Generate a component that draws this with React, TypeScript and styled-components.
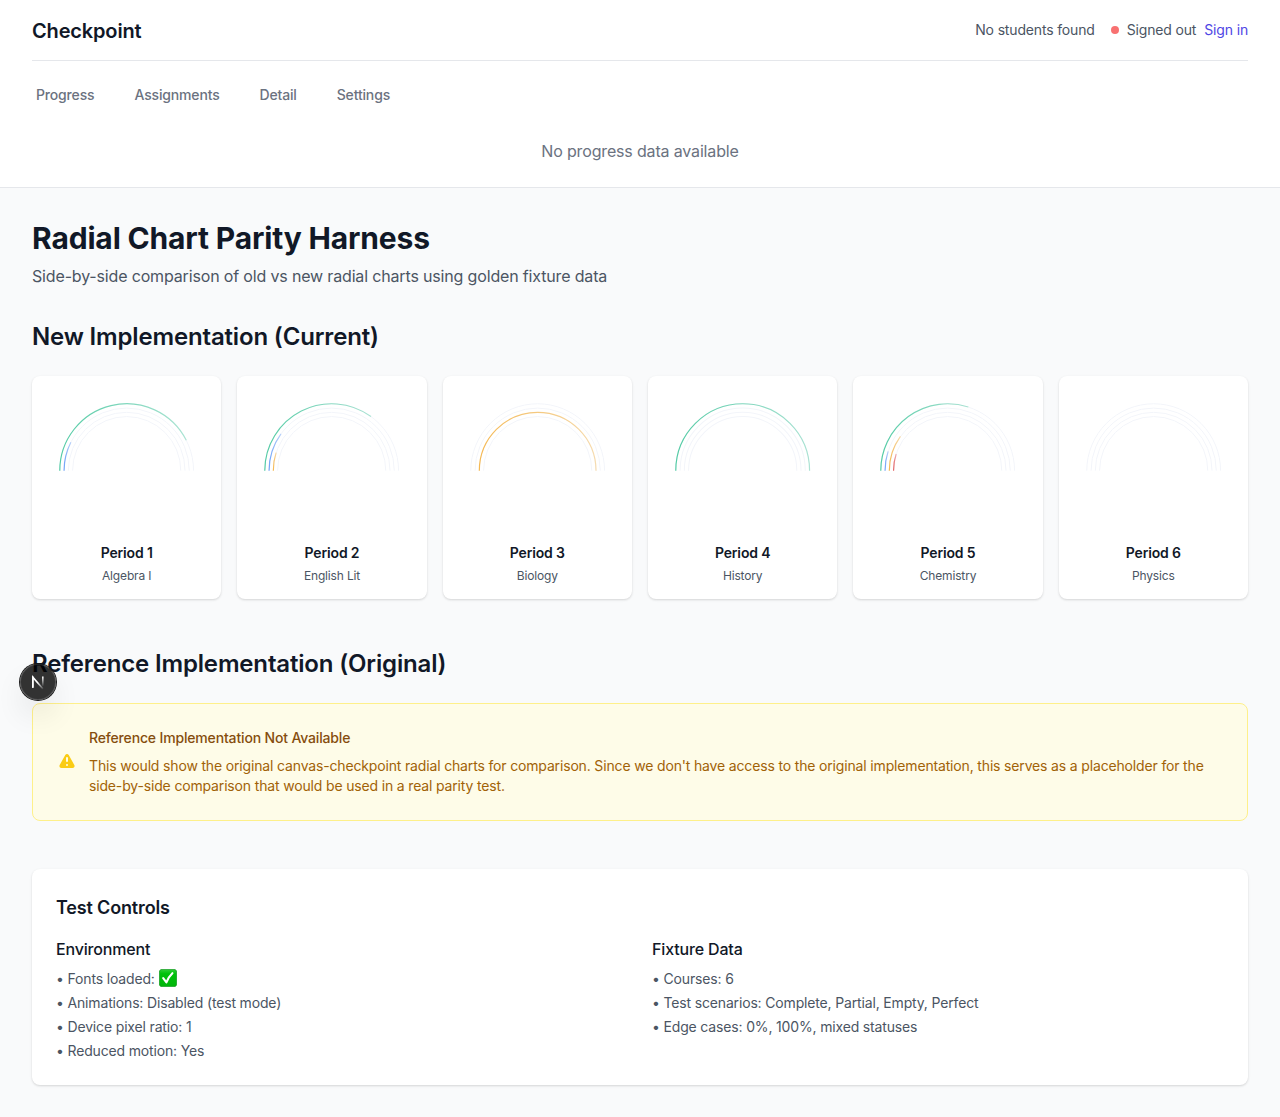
import React from "react";
import styled, { createGlobalStyle } from "styled-components";

const GlobalStyle = createGlobalStyle`
  *, *::before, *::after { box-sizing: border-box; margin: 0; padding: 0; }
  body {
    background: #f9fafb;
    color: #111827;
    font-family: Inter, "Liberation Sans", sans-serif;
    font-size: 16px;
    line-height: 24px;
    letter-spacing: -0.01em;
    overflow-x: hidden;
    -webkit-font-smoothing: antialiased;
  }
`;

const Page = styled.div`
  min-height: 1117px;
  background: #f9fafb;
`;

const Header = styled.header`
  height: 188px;
  padding: 0 32px;
  background: #fff;
  border-bottom: 1px solid #e5e7eb;
`;

const TopBar = styled.div`
  display: flex;
  align-items: center;
  justify-content: space-between;
  height: 61px;
  border-bottom: 1px solid #e5e7eb;
`;

const Brand = styled.div`
  font-size: 20px;
  line-height: 28px;
  font-weight: 600;
  padding-top: 2px;
`;

const Account = styled.div`
  display: flex;
  align-items: center;
  gap: 8px;
  font-size: 14px;
  line-height: 20px;
  color: #4b5563;
`;

const StudentStatus = styled.span`
  margin-right: 8px;
`;

const StatusDot = styled.span`
  width: 8px;
  height: 8px;
  border-radius: 50%;
  background: #f87171;
`;

const SignIn = styled.a`
  color: #4f46e5;
`;

const Nav = styled.nav`
  display: flex;
  gap: 40px;
  padding: 24px 4px 0;
`;

const NavItem = styled.a`
  font-size: 14px;
  line-height: 20px;
  font-weight: 500;
  color: #6b7280;
`;

const EmptyMessage = styled.p`
  margin-top: 34px;
  text-align: center;
  color: #6b7280;
`;

const Main = styled.main`
  padding: 32px;
`;

const Title = styled.h1`
  font-size: 30px;
  line-height: 36px;
  font-weight: 700;
`;

const Subtitle = styled.p`
  margin-top: 8px;
  color: #4b5563;
`;

const Section = styled.section<{ $gap: number }>`
  margin-top: ${(p) => p.$gap}px;
`;

const SectionTitle = styled.h2`
  padding-top: 1px;
  margin-bottom: 23px;
  font-size: 24px;
  line-height: 32px;
  font-weight: 600;
`;

const Card = styled.div`
  background: #fff;
  border-radius: 8px;
  box-shadow: 0 1px 3px rgba(0, 0, 0, 0.1), 0 1px 2px rgba(0, 0, 0, 0.06);
`;

const CourseGrid = styled.div`
  display: grid;
  grid-template-columns: repeat(6, minmax(0, 1fr));
  gap: 16px;
`;

const CourseCard = styled(Card)`
  padding: 16px 16px 15px;
  text-align: center;
`;

const ChartBox = styled.div`
  height: 151.33px;
`;

const ChartSvg = styled.svg`
  display: block;
  width: 100%;
  overflow: visible;
`;

const CourseName = styled.h3`
  font-size: 14px;
  line-height: 20px;
  font-weight: 600;
`;

const CourseSubject = styled.p`
  margin-top: 5px;
  font-size: 12px;
  line-height: 16px;
  color: #4b5563;
`;

const Notice = styled.div`
  display: flex;
  align-items: center;
  gap: 12px;
  padding: 24px;
  background: #fefce8;
  border: 1px solid #fef08a;
  border-radius: 8px;
  font-size: 14px;
  line-height: 20px;
`;

const WarningSvg = styled.svg`
  flex: none;
  width: 20px;
  height: 20px;
  fill: #facc15;
`;

const NoticeTitle = styled.h3`
  font-size: 14px;
  font-weight: 500;
  color: #854d0e;
`;

const NoticeText = styled.p`
  margin-top: 8px;
  color: #a16207;
`;

const Controls = styled(Card)`
  padding: 25px 24px 24px;
`;

const ControlsTitle = styled.h3`
  font-size: 18px;
  line-height: 28px;
  font-weight: 600;
`;

const Columns = styled.div`
  display: grid;
  grid-template-columns: 1fr 1fr;
  gap: 24px;
  margin-top: 15px;
`;

const ColumnTitle = styled.h4`
  margin-bottom: 8px;
  font-size: 16px;
  line-height: 24px;
  font-weight: 500;
`;

const List = styled.ul`
  display: grid;
  gap: 4px;
  list-style: none;
`;

const Item = styled.li`
  display: flex;
  align-items: center;
  height: 20px;
  font-size: 14px;
  line-height: 20px;
  color: #4b5563;
`;

const CheckSvg = styled.svg`
  width: 18px;
  height: 18px;
  margin: -2px 0 0 4px;
`;

const DevBadge = styled.button`
  position: fixed;
  left: 20px;
  top: 664px;
  width: 36px;
  height: 36px;
  border: 0;
  border-radius: 50%;
  background: rgba(0, 0, 0, 0.8);
  box-shadow: 0 0 0 1px #171717, inset 0 0 0 1px rgba(255, 255, 255, 0.14),
    0 16px 32px -8px rgba(0, 0, 0, 0.24);
`;

const BadgeSvg = styled.svg`
  display: block;
  width: 36px;
  height: 36px;
`;

const RADII = [66.9, 62.6, 58.35, 54.1];
const COLORS = ["#10b981", "#3b82f6", "#f59e0b", "#dc2626"];
const CENTER = 78.67;

function arc(radius: number, fraction: number) {
  const angle = Math.PI * (1 - fraction);
  const x = CENTER + radius * Math.cos(angle);
  const y = CENTER - radius * Math.sin(angle);
  return `M${CENTER - radius} ${CENTER}A${radius} ${radius} 0 0 1 ${x} ${y}`;
}

function RadialChart({ id, values }: { id: number; values: number[] }) {
  return (
    <ChartSvg viewBox="0 0 157.33 157.33" fill="none">
      <defs>
        {COLORS.map((color, i) => (
          <linearGradient key={color} id={`ring-${id}-${i}`} x1="0" y1="0" x2="1" y2="0">
            <stop offset="0" stopColor={color} stopOpacity="0.7" />
            <stop offset="1" stopColor={color} stopOpacity="0.32" />
          </linearGradient>
        ))}
      </defs>
      {RADII.map((r) => (
        <path key={r} d={arc(r, 1)} stroke="#f3f5fa" strokeWidth="1" />
      ))}
      {values.map((value, i) =>
        value > 0 ? (
          <path key={i} d={arc(RADII[i], value)} stroke={`url(#ring-${id}-${i})`} strokeWidth="1.2" />
        ) : null
      )}
    </ChartSvg>
  );
}

const COURSES = [
  { name: "Period 1", subject: "Algebra I", values: [0.85, 0.15, 0, 0] },
  { name: "Period 2", subject: "English Lit", values: [0.7, 0.2, 0.1, 0] },
  { name: "Period 3", subject: "Biology", values: [0, 0, 1, 0] },
  { name: "Period 4", subject: "History", values: [1, 0, 0, 0] },
  { name: "Period 5", subject: "Chemistry", values: [0.6, 0.1, 0.2, 0.1] },
  { name: "Period 6", subject: "Physics", values: [0, 0, 0, 0] },
];

function WarningIcon() {
  return (
    <WarningSvg viewBox="0 0 20 20">
      <path
        fillRule="evenodd"
        clipRule="evenodd"
        d="M8.257 3.099c.765-1.36 2.722-1.36 3.486 0l5.58 9.92c.75 1.334-.213 2.98-1.742 2.98H4.42c-1.53 0-2.493-1.646-1.743-2.98l5.58-9.92zM11 13a1 1 0 11-2 0 1 1 0 012 0zm-1-8a1 1 0 00-1 1v3a1 1 0 002 0V6a1 1 0 00-1-1z"
      />
    </WarningSvg>
  );
}

function CheckIcon() {
  return (
    <CheckSvg viewBox="0 0 18 18">
      <defs>
        <linearGradient id="check-fill" x1="0" y1="0" x2="0" y2="1">
          <stop offset="0" stopColor="#31cf38" />
          <stop offset="0.25" stopColor="#00c20b" />
          <stop offset="1" stopColor="#00b50a" />
        </linearGradient>
      </defs>
      <rect x="0.4" y="0.4" width="17.2" height="17.2" rx="2.6" fill="url(#check-fill)" stroke="#159d22" strokeWidth="0.8" />
      <path d="M4.2 9.2L7.4 13.4Q9.2 8.2 13.4 4.2" fill="none" stroke="#fff" strokeWidth="2.1" strokeLinecap="round" strokeLinejoin="round" />
    </CheckSvg>
  );
}

function FrameworkMark() {
  return (
    <BadgeSvg viewBox="0 0 36 36" fill="none">
      <defs>
        <linearGradient id="stem" x1="0" y1="12.5" x2="0" y2="22.5" gradientUnits="userSpaceOnUse">
          <stop stopColor="#fff" />
          <stop offset="1" stopColor="#fff" stopOpacity="0" />
        </linearGradient>
        <linearGradient id="diagonal" x1="18" y1="18" x2="23.5" y2="24.5" gradientUnits="userSpaceOnUse">
          <stop stopColor="#fff" />
          <stop offset="1" stopColor="#fff" stopOpacity="0.1" />
        </linearGradient>
      </defs>
      <path d="M12.8 23.7V13.1L22.9 24.7" stroke="url(#diagonal)" strokeWidth="1.6" />
      <path d="M12.8 23.7V12.5" stroke="#fff" strokeWidth="1.6" />
      <path d="M22.8 12.5V23.3" stroke="url(#stem)" strokeWidth="1.6" />
    </BadgeSvg>
  );
}

export default function App() {
  return (
    <Page>
      <GlobalStyle />
      <Header>
        <TopBar>
          <Brand>Checkpoint</Brand>
          <Account>
            <StudentStatus>No students found</StudentStatus>
            <StatusDot />
            <span>Signed out</span>
            <SignIn>Sign in</SignIn>
          </Account>
        </TopBar>
        <Nav>
          {["Progress", "Assignments", "Detail", "Settings"].map((label) => (
            <NavItem key={label}>{label}</NavItem>
          ))}
        </Nav>
        <EmptyMessage>No progress data available</EmptyMessage>
      </Header>
      <Main>
        <Title>Radial Chart Parity Harness</Title>
        <Subtitle>Side-by-side comparison of old vs new radial charts using golden fixture data</Subtitle>
        <Section $gap={32}>
          <SectionTitle>New Implementation (Current)</SectionTitle>
          <CourseGrid>
            {COURSES.map((course, i) => (
              <CourseCard key={course.name}>
                <ChartBox>
                  <RadialChart id={i} values={course.values} />
                </ChartBox>
                <CourseName>{course.name}</CourseName>
                <CourseSubject>{course.subject}</CourseSubject>
              </CourseCard>
            ))}
          </CourseGrid>
        </Section>
        <Section $gap={48}>
          <SectionTitle>Reference Implementation (Original)</SectionTitle>
          <Notice>
            <WarningIcon />
            <div>
              <NoticeTitle>Reference Implementation Not Available</NoticeTitle>
              <NoticeText>
                This would show the original canvas-checkpoint radial charts for comparison. Since we don't have access
                to the original implementation, this serves as a placeholder for the side-by-side comparison that would
                be used in a real parity test.
              </NoticeText>
            </div>
          </Notice>
        </Section>
        <Section $gap={48}>
          <Controls>
            <ControlsTitle>Test Controls</ControlsTitle>
            <Columns>
              <div>
                <ColumnTitle>Environment</ColumnTitle>
                <List>
                  <Item>• Fonts loaded: <CheckIcon /></Item>
                  <Item>• Animations: Disabled (test mode)</Item>
                  <Item>• Device pixel ratio: 1</Item>
                  <Item>• Reduced motion: Yes</Item>
                </List>
              </div>
              <div>
                <ColumnTitle>Fixture Data</ColumnTitle>
                <List>
                  <Item>• Courses: 6</Item>
                  <Item>• Test scenarios: Complete, Partial, Empty, Perfect</Item>
                  <Item>• Edge cases: 0%, 100%, mixed statuses</Item>
                </List>
              </div>
            </Columns>
          </Controls>
        </Section>
      </Main>
      <DevBadge aria-label="Open developer tools">
        <FrameworkMark />
      </DevBadge>
    </Page>
  );
}
